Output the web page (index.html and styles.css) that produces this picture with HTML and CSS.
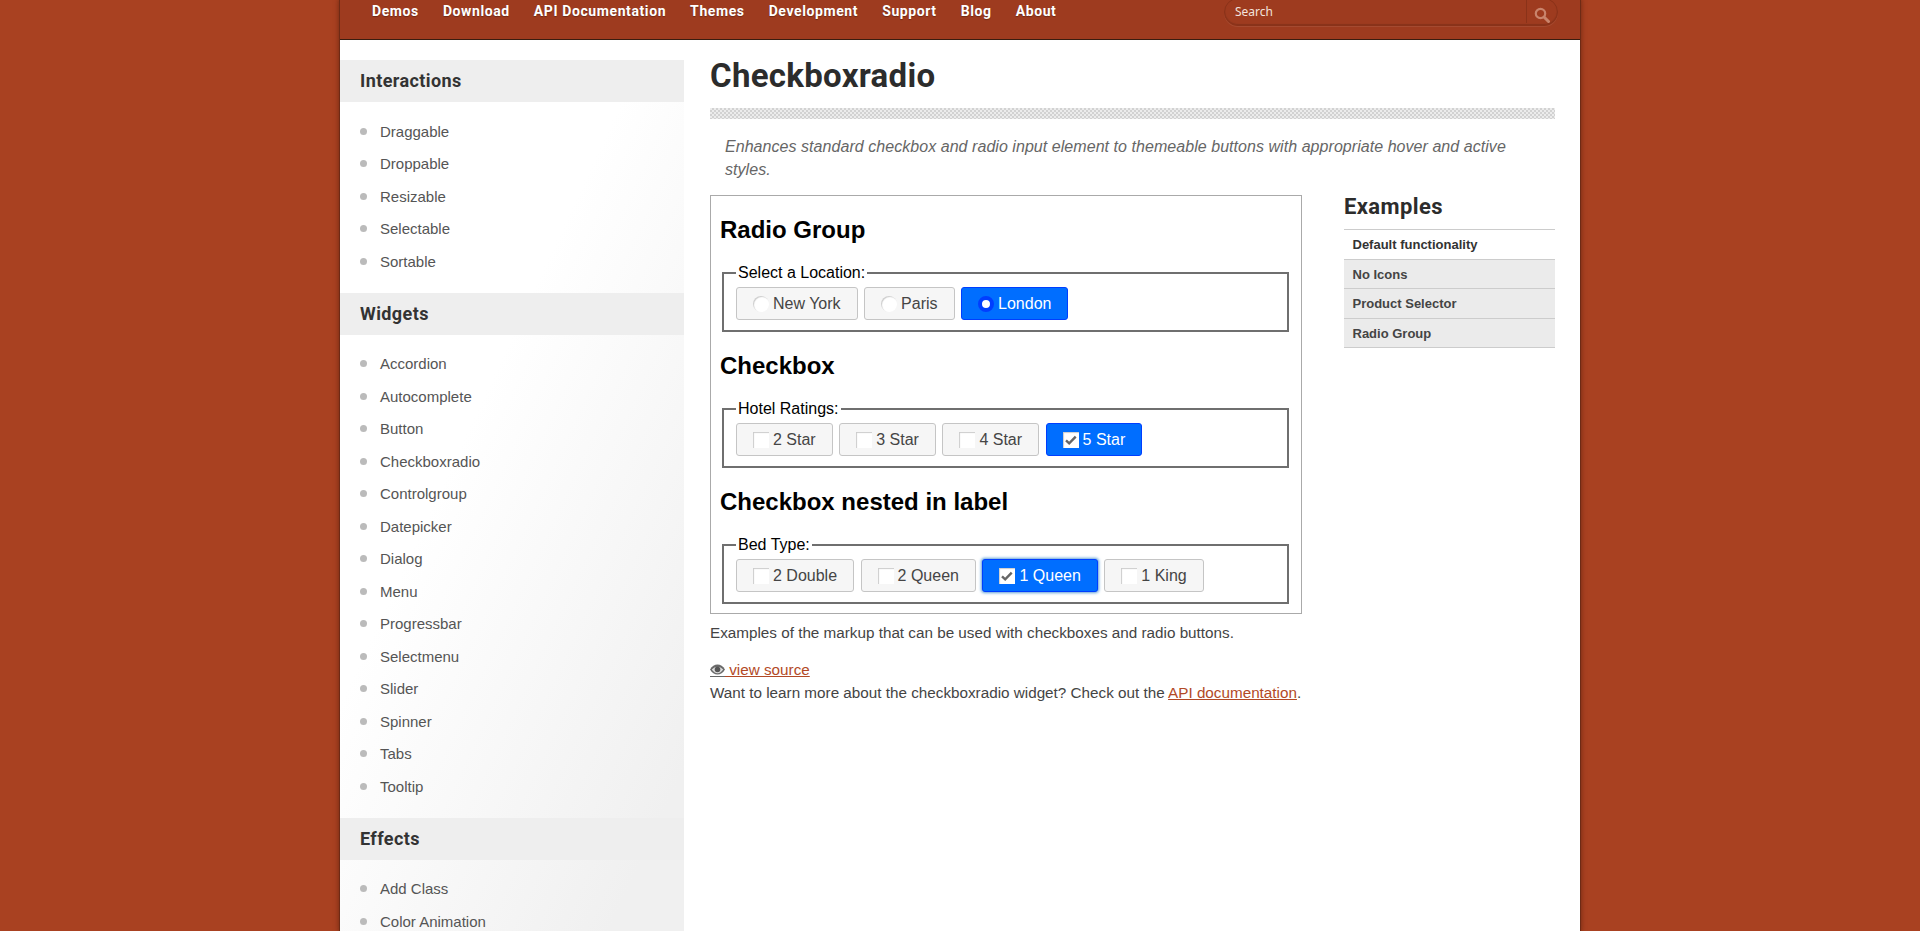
FILE: index.html
```html
<!DOCTYPE html>
<html lang="en">
<head>
<meta charset="utf-8">
<title>Checkboxradio</title>
<link rel="stylesheet" href="styles.css">
</head>
<body>
<div class="page">
  <header class="topbar">
    <nav class="nav">
      <a>Demos</a><a>Download</a><a>API Documentation</a><a>Themes</a><a>Development</a><a>Support</a><a>Blog</a><a>About</a>
    </nav>
    <div class="search">
      <span class="search-text">Search</span>
      <span class="search-btn">
        <svg width="16" height="16" viewBox="0 0 16 16"><circle cx="6.500" cy="6.500" r="4.700" fill="none" stroke="#c9846c" stroke-width="2.200"/><path d="M10 10l4.500 4.500" stroke="#c9846c" stroke-width="3" stroke-linecap="round"/></svg>
      </span>
    </div>
  </header>
  <div class="main">
    <aside class="sidebar">
      <h3 class="side-head">Interactions</h3>
      <ul class="side-list">
        <li>Draggable</li><li>Droppable</li><li>Resizable</li><li>Selectable</li><li>Sortable</li>
      </ul>
      <h3 class="side-head">Widgets</h3>
      <ul class="side-list">
        <li>Accordion</li><li>Autocomplete</li><li>Button</li><li>Checkboxradio</li><li>Controlgroup</li><li>Datepicker</li><li>Dialog</li><li>Menu</li><li>Progressbar</li><li>Selectmenu</li><li>Slider</li><li>Spinner</li><li>Tabs</li><li>Tooltip</li>
      </ul>
      <h3 class="side-head">Effects</h3>
      <ul class="side-list">
        <li>Add Class</li><li>Color Animation</li>
      </ul>
    </aside>
    <main class="content">
      <h1 class="title">Checkboxradio</h1>
      <div class="hatch"></div>
      <p class="lead">Enhances standard checkbox and radio input element to themeable buttons with appropriate hover and active styles.</p>
      <div class="columns">
        <div class="primary">
          <div class="demo">
            <h2 class="demo-head">Radio Group</h2>
            <fieldset class="set">
              <legend>Select a Location:</legend>
              <div class="btns">
                <label class="btn"><span class="radio"></span>New York</label>
                <label class="btn"><span class="radio"></span>Paris</label>
                <label class="btn on"><span class="radio dot"></span>London</label>
              </div>
            </fieldset>
            <h2 class="demo-head">Checkbox</h2>
            <fieldset class="set">
              <legend>Hotel Ratings:</legend>
              <div class="btns">
                <label class="btn"><span class="box"></span>2 Star</label>
                <label class="btn"><span class="box"></span>3 Star</label>
                <label class="btn"><span class="box"></span>4 Star</label>
                <label class="btn on"><span class="box"><svg class="tick" width="16" height="16" viewBox="0 0 16 16"><path d="M3 8.300l3.200 3.100 6.500-6.800" fill="none" stroke="#666" stroke-width="2.400"/></svg></span>5 Star</label>
              </div>
            </fieldset>
            <h2 class="demo-head">Checkbox nested in label</h2>
            <fieldset class="set">
              <legend>Bed Type:</legend>
              <div class="btns">
                <label class="btn"><span class="box"></span>2 Double</label>
                <label class="btn"><span class="box"></span>2 Queen</label>
                <label class="btn on glow"><span class="box"><svg class="tick" width="16" height="16" viewBox="0 0 16 16"><path d="M3 8.300l3.200 3.100 6.500-6.800" fill="none" stroke="#666" stroke-width="2.400"/></svg></span>1 Queen</label>
                <label class="btn"><span class="box"></span>1 King</label>
              </div>
            </fieldset>
          </div>
          <p class="desc">Examples of the markup that can be used with checkboxes and radio buttons.</p>
          <p class="source"><a class="link"><svg class="eye" width="15" height="12" viewBox="0 0 15 12"><path d="M0 5.500C2 2 4.500 .5 7.500 .5S13 2 15 5.500C13 9 10.500 10.500 7.500 10.500S2 9 0 5.500Z" fill="#6a6a6a"/><path d="M1.800 5.500C3.400 7.900 5.300 9.200 7.500 9.200S11.600 7.900 13.200 5.500C11.600 3.800 9.600 3 7.500 3S3.400 3.800 1.800 5.500Z" fill="#ddd"/><circle cx="7.500" cy="5.500" r="2.800" fill="#555"/></svg> view source</a></p>
          <p class="more">Want to learn more about the checkboxradio widget? Check out the <a class="link">API documentation</a>.</p>
        </div>
        <aside class="examples">
          <h2 class="ex-title">Examples</h2>
          <ul class="ex-list">
            <li class="active">Default functionality</li><li>No Icons</li><li>Product Selector</li><li>Radio Group</li>
          </ul>
        </aside>
      </div>
    </main>
  </div>
</div>
</body>
</html>
```
FILE: styles.css
```css
html, body { margin: 0; height: 931px; overflow: hidden; }
body {
  background: #a94121;
  font-family: "Liberation Sans", Arial, sans-serif;
  color: #333;
}
.page {
  width: 1240px;
  height: 931px;
  margin: 0 auto;
  background: #fff;
  box-shadow: 0 0 0 1px #6e2a15, 0 0 5px 1px rgba(60,20,5,.55);
}
.topbar {
  height: 39px;
  background: #9e3b1f;
  border-bottom: 1px solid #3a1d10;
  display: flex;
  justify-content: space-between;
  padding-left: 32px;
  padding-right: 22px;
}
.nav { display: flex; gap: 24px; padding-top: 2px; }
.nav a {
  font-family: Roboto, sans-serif;
  font-weight: 700;
  font-size: 14px;
  line-height: 19px;
  letter-spacing: .6px;
  color: #fff;
  text-shadow: 0 1px 1px rgba(0,0,0,.3);
}
.search {
  width: 334px;
  height: 28px;
  margin-top: -2px;
  box-sizing: border-box;
  border: 1px solid #8a3219;
  border-radius: 14px;
  box-shadow: inset 0 -1px 1px rgba(0,0,0,.15), 0 1px 0 rgba(255,255,255,.08);
  display: flex;
  justify-content: space-between;
  padding-left: 10px;
}
.search-text { font-family: "Noto Sans", sans-serif; font-size: 12px; line-height: 26px; color: #f3e3dd; }
.search-btn {
  width: 31px;
  height: 24px;
  border-left: 1px solid #8a3219;
  display: flex;
  padding: 8px 0 0 7px;
  box-sizing: border-box;
}
.main { display: flex; padding-top: 20px; }
.sidebar {
  width: 344px;
  height: 871px;
  flex: none;
  background: linear-gradient(115deg, #fff 40%, #f0f0f0 90%);
}
.side-head {
  margin: 0;
  height: 42px;
  padding-left: 20px;
  background: #eee;
  font-family: Roboto, sans-serif;
  font-weight: 700;
  font-size: 18px;
  letter-spacing: .4px;
  line-height: 41px;
  color: #333;
}
.side-list {
  list-style: none;
  margin: 0;
  padding: 12.5px 0 15.5px 20px;
}
.side-list li {
  height: 32.5px;
  font-size: 15px;
  line-height: 33px;
  color: #555;
  padding-left: 20px;
  position: relative;
}
.side-list li::before {
  content: "";
  position: absolute;
  left: 0;
  top: 13px;
  width: 7px;
  height: 7px;
  border-radius: 50%;
  background: #bbb;
}
.content { width: 845px; margin-left: 26px; flex: none; }
.title {
  margin: 0;
  height: 48px;
  font-family: Roboto, sans-serif;
  font-weight: 700;
  font-size: 33px;
  letter-spacing: .3px;
  line-height: 32px;
  color: #2c2c2c;
}
.hatch {
  height: 11px;
  background: repeating-conic-gradient(#d2d2d2 0 25%, #ececec 0 50%) 0 0 / 4px 4px;
}
.lead {
  margin: 0;
  padding: 16px 15px 0;
  height: 60px;
  font-size: 16px;
  letter-spacing: .05px;
  line-height: 23px;
  font-style: italic;
  color: #666;
}
.columns { display: flex; justify-content: space-between; }
.primary { width: 592px; }
.demo {
  height: 419px;
  box-sizing: border-box;
  border: 1px solid #aaa;
  padding: 0 9px;
}
.demo-head {
  margin: 0;
  font-size: 24px;
  line-height: 28px;
  padding: 20px 0;
  color: #000;
}
.set {
  margin: 0 3px 0 2px;
  padding: 5px 12px 10.5px;
  border: 2px solid #6f6f6f;
  min-width: 0;
}
.set legend { font-size: 16px; line-height: 18px; padding: 0 2px; color: #000; }
.btns { display: flex; gap: 6.5px; }
.btn {
  box-sizing: border-box;
  height: 32.5px;
  border: 1px solid #c5c5c5;
  border-radius: 3px;
  background: #f6f6f6;
  color: #454545;
  font-size: 16px;
  padding: 1px 16px 0;
  display: flex;
  align-items: center;
  gap: 4px;
}
.btn.on { background: #006eff; border-color: #003eff; color: #fff; }
.btn.glow { box-shadow: 0 0 3px 1px #5e9ed6; }
.radio, .box {
  flex: none;
  width: 16px;
  height: 16px;
  background: #fff;
  display: block;
  box-shadow: inset 1px 1px 1px #ccc;
}
.radio { border-radius: 50%; }
.radio.dot { border: 4px solid #003eff; width: 8px; height: 8px; box-shadow: none; }
.tick { display: block; }
.desc { margin: 0; padding-top: 9px; font-size: 15.25px; line-height: 20px; color: #444; }
.source { margin: 0; padding-top: 17px; font-size: 15.25px; line-height: 20px; color: #444; }
.more { margin: 0; padding-top: 3px; font-size: 15.25px; line-height: 20px; color: #444; }
.link { color: #b24926; text-decoration: underline; }
.eye { vertical-align: -2px; border-bottom: 1px solid #666; }
.examples { width: 211px; }
.ex-title {
  margin: 0;
  height: 34px;
  font-family: Roboto, sans-serif;
  font-weight: 700;
  font-size: 22px;
  letter-spacing: .4px;
  line-height: 23px;
  color: #2c2c2c;
}
.ex-list { list-style: none; margin: 0; padding: 0; border-top: 1px solid #ccc; }
.ex-list li {
  height: 28.5px;
  border-bottom: 1px solid #ccc;
  background: #ebebeb;
  padding-left: 8.5px;
  font-size: 13px;
  font-weight: 700;
  line-height: 29px;
  color: #444;
}
.ex-list li.active { background: #fff; color: #333; }
```
